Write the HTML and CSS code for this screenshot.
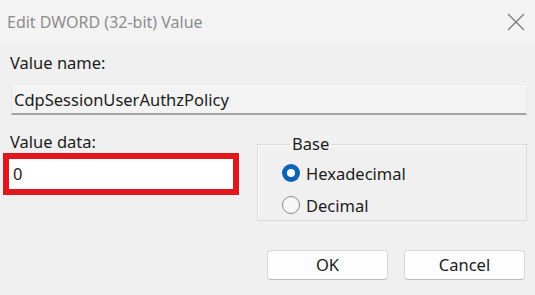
FILE: index.html
```html
<!DOCTYPE html>
<html>
<head>
<meta charset="utf-8">
<link rel="stylesheet" href="styles.css">
</head>
<body>
<div class="dialog">
  <div class="titlebar">
    <span class="title">Edit DWORD (32-bit) Value</span>
    <svg class="close" width="18" height="18" viewBox="0 0 18 18"><path d="M1 1L17 17M17 1L1 17" stroke="#7c7c7c" stroke-width="1.3" fill="none"/></svg>
  </div>
  <div class="content">
    <div class="label name-label">Value name:</div>
    <div class="name-field">CdpSessionUserAuthzPolicy</div>
    <div class="lower">
      <div class="data-col">
        <div class="label data-label">Value data:</div>
        <div class="highlight"><div class="data-field">0</div></div>
      </div>
      <fieldset class="base">
        <legend>Base</legend>
        <div class="radio"><span class="dot checked"></span><span>Hexadecimal</span></div>
        <div class="radio"><span class="dot"></span><span>Decimal</span></div>
      </fieldset>
    </div>
    <div class="buttons">
      <div class="btn">OK</div>
      <div class="btn">Cancel</div>
    </div>
  </div>
</div>
</body>
</html>
```
FILE: styles.css
```css
html, body {
  margin: 0;
  padding: 0;
  background: #f0f0f0;
}
body {
  font-family: "Noto Sans", "Open Sans", sans-serif;
  font-size: 16.5px;
  color: #1c1c1c;
  width: 535px;
  height: 295px;
  overflow: hidden;
}
.titlebar {
  height: 43px;
  background: #f3f3f3;
  display: flex;
  align-items: center;
  justify-content: space-between;
  padding: 0 10px 0 7px;
}
.title {
  font-size: 16px;
  color: #8d8d8d;
}
.content {
  padding: 0 8px 0 3px;
}
.label {
  line-height: 20px;
  padding-left: 7px;
}
.name-label {
  margin-top: 10px;
}
.name-field {
  margin: 13px 0 0 8px;
  height: 26px;
  line-height: 26px;
  padding-left: 2px;
  background: #f3f3f3;
  border: 1px solid #e6e6e6;
  border-bottom: 2px solid #a3a3a3;
  border-top-color: #fafafa;
}
.lower {
  display: flex;
  align-items: flex-start;
  margin-top: 17px;
}
.data-col {
  width: 236px;
}
.data-label {
  line-height: 20px;
}
.highlight {
  margin-top: 1px;
  border: 6px solid #e2161d;
}
.data-field {
  height: 30px;
  line-height: 30px;
  background: #ffffff;
  padding-left: 4px;
}
.base {
  margin: 4px 0 0 18px;
  flex: 1;
  height: 85px;
  box-sizing: border-box;
  border: 1px solid #dadada;
  box-shadow: inset 1px 1px 0 #fbfbfb;
  padding: 5px 0 0 24px;
}
.base legend {
  padding: 0 2px;
  margin-left: 8px;
  line-height: 16px;
}
.radio {
  display: flex;
  align-items: center;
  gap: 6px;
  height: 32px;
}
.dot {
  width: 16px;
  height: 16px;
  border-radius: 50%;
  border: 1px solid #8a8a8a;
  background: #f7f7f7;
  position: relative;
}
.dot.checked {
  width: 18px;
  height: 18px;
  border: none;
  background: #0a63b8;
}
.dot.checked::after {
  content: "";
  position: absolute;
  left: 5px;
  top: 5px;
  width: 8px;
  height: 8px;
  border-radius: 50%;
  background: #ffffff;
}
.buttons {
  display: flex;
  justify-content: flex-end;
  gap: 16px;
  margin-top: 29px;
  padding-right: 2px;
}
.btn {
  width: 119px;
  height: 28px;
  line-height: 28px;
  text-align: center;
  background: #fdfdfd;
  border: 1px solid #d6d6d6;
  border-bottom-color: #bcbcbc;
  border-radius: 4px;
}
```
